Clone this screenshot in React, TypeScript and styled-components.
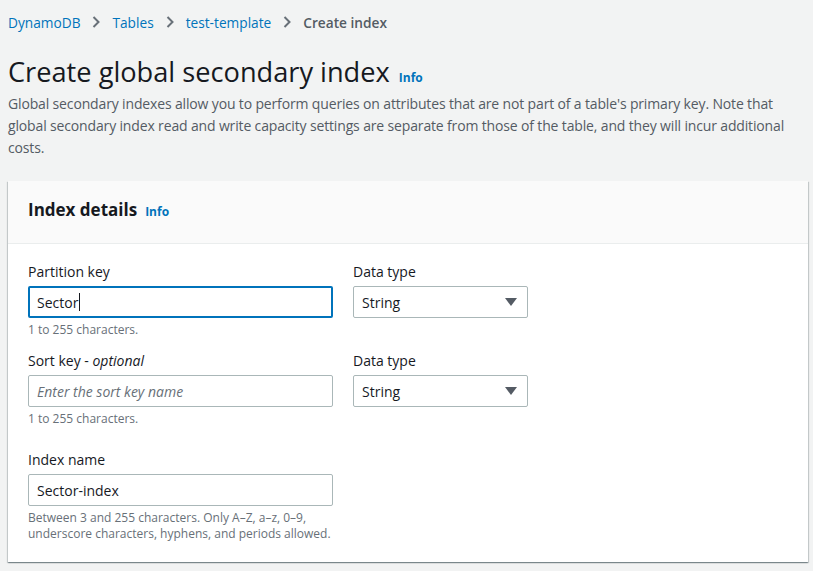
import React from "react";
import styled, { createGlobalStyle } from "styled-components";

const GlobalStyle = createGlobalStyle`
  html, body {
    margin: 0;
    padding: 0;
    background: #f2f3f3;
  }
  body {
    font-family: "Open Sans", "Noto Sans", sans-serif;
    color: #16191f;
  }
`;

const Page = styled.div`
  width: 813px;
  height: 571px;
  box-sizing: border-box;
  padding: 12px 5px 0 8px;
  overflow: hidden;
`;

const Breadcrumbs = styled.nav`
  display: flex;
  align-items: center;
  gap: 12px;
  height: 20px;
  font-size: 13.7px;
`;

const Crumb = styled.a<{ $current?: boolean }>`
  color: ${(p) => (p.$current ? "#545b64" : "#0073bb")};
  font-weight: ${(p) => (p.$current ? 600 : 400)};
  text-decoration: none;
`;

const Chevron = () => (
  <svg width="8" height="14" viewBox="0 0 8 14">
    <path d="M1.5 2 L6.5 7 L1.5 12" fill="none" stroke="#687078" strokeWidth="2" />
  </svg>
);

const TitleRow = styled.div`
  display: flex;
  align-items: baseline;
  gap: 9px;
  margin-top: 22px;
`;

const Title = styled.h1`
  margin: 0;
  font-size: 27.2px;
  font-weight: 400;
  line-height: 36px;
  color: #16191f;
`;

const Info = styled.a`
  color: #0073bb;
  font-size: 12px;
  font-weight: 700;
  text-decoration: none;
`;

const Description = styled.p`
  margin: 3px 0 0;
  font-size: 14px;
  line-height: 22px;
  letter-spacing: -0.15px;
  color: #545b64;
  max-width: 790px;
`;

const Card = styled.section`
  margin-top: 22px;
  background: #fff;
  box-shadow: 0 1px 1px 0 rgba(0, 28, 36, 0.3), 1px 1px 1px 0 rgba(0, 28, 36, 0.15),
    -1px 1px 1px 0 rgba(0, 28, 36, 0.15);
`;

const CardHeader = styled.header`
  display: flex;
  align-items: baseline;
  gap: 8px;
  height: 63px;
  box-sizing: border-box;
  padding: 17px 20px 0;
  background: #fafafa;
  border-bottom: 1px solid #eaeded;
`;

const CardTitle = styled.h2`
  margin: 0;
  font-size: 17px;
  font-weight: 700;
  line-height: 24px;
`;

const CardBody = styled.div`
  display: flex;
  flex-direction: column;
  padding: 17px 20px 20px;
`;

const FieldRow = styled.div<{ $gapTop?: number }>`
  display: flex;
  gap: 20px;
  margin-top: ${(p) => p.$gapTop ?? 0}px;
`;

const Field = styled.div<{ $width: number }>`
  width: ${(p) => p.$width}px;
  display: flex;
  flex-direction: column;
`;

const Label = styled.label`
  font-size: 14px;
  line-height: 22px;
  color: #16191f;
  margin-bottom: 3px;

  em {
    font-style: italic;
  }
`;

const Input = styled.div<{ $focused?: boolean; $placeholder?: boolean }>`
  height: 32px;
  box-sizing: border-box;
  display: flex;
  align-items: center;
  padding: 0 8px;
  border: ${(p) => (p.$focused ? "2px solid #0073bb" : "1px solid #aab7b8")};
  padding-left: ${(p) => (p.$focused ? "7px" : "8px")};
  border-radius: 2px;
  font-size: 14px;
  color: ${(p) => (p.$placeholder ? "#687078" : "#16191f")};
  font-style: ${(p) => (p.$placeholder ? "italic" : "normal")};
  background: #fff;
`;

const Caret = styled.span`
  display: inline-block;
  width: 1px;
  height: 18px;
  background: #16191f;
  margin-left: 1px;
`;

const Select = styled(Input)`
  justify-content: space-between;
  padding-right: 10px;
`;

const Hint = styled.div`
  font-size: 12px;
  line-height: 16px;
  color: #687078;
  margin-top: 4px;
`;

const Triangle = () => (
  <svg width="12" height="10" viewBox="0 0 12 10">
    <path d="M0 1 L12 1 L6 9 Z" fill="#545b64" />
  </svg>
);

export default function App() {
  return (
    <>
      <GlobalStyle />
      <Page>
        <Breadcrumbs>
          <Crumb href="#">DynamoDB</Crumb>
          <Chevron />
          <Crumb href="#">Tables</Crumb>
          <Chevron />
          <Crumb href="#">test-template</Crumb>
          <Chevron />
          <Crumb $current>Create index</Crumb>
        </Breadcrumbs>
        <TitleRow>
          <Title>Create global secondary index</Title>
          <Info href="#">Info</Info>
        </TitleRow>
        <Description>
          Global secondary indexes allow you to perform queries on attributes that are not part of a
          table's primary key. Note that global secondary index read and write capacity settings are
          separate from those of the table, and they will incur additional costs.
        </Description>
        <Card>
          <CardHeader>
            <CardTitle>Index details</CardTitle>
            <Info href="#">Info</Info>
          </CardHeader>
          <CardBody>
            <FieldRow>
              <Field $width={305}>
                <Label>Partition key</Label>
                <Input $focused>
                  Sector
                  <Caret />
                </Input>
                <Hint>1 to 255 characters.</Hint>
              </Field>
              <Field $width={175}>
                <Label>Data type</Label>
                <Select>
                  String
                  <Triangle />
                </Select>
              </Field>
            </FieldRow>
            <FieldRow $gapTop={12}>
              <Field $width={305}>
                <Label>
                  Sort key - <em>optional</em>
                </Label>
                <Input $placeholder>Enter the sort key name</Input>
                <Hint>1 to 255 characters.</Hint>
              </Field>
              <Field $width={175}>
                <Label>Data type</Label>
                <Select>
                  String
                  <Triangle />
                </Select>
              </Field>
            </FieldRow>
            <FieldRow $gapTop={22}>
              <Field $width={305}>
                <Label>Index name</Label>
                <Input>Sector-index</Input>
                <Hint>
                  Between 3 and 255 characters. Only A–Z, a–z, 0–9,
                  <br />
                  underscore characters, hyphens, and periods allowed.
                </Hint>
              </Field>
            </FieldRow>
          </CardBody>
        </Card>
      </Page>
    </>
  );
}
